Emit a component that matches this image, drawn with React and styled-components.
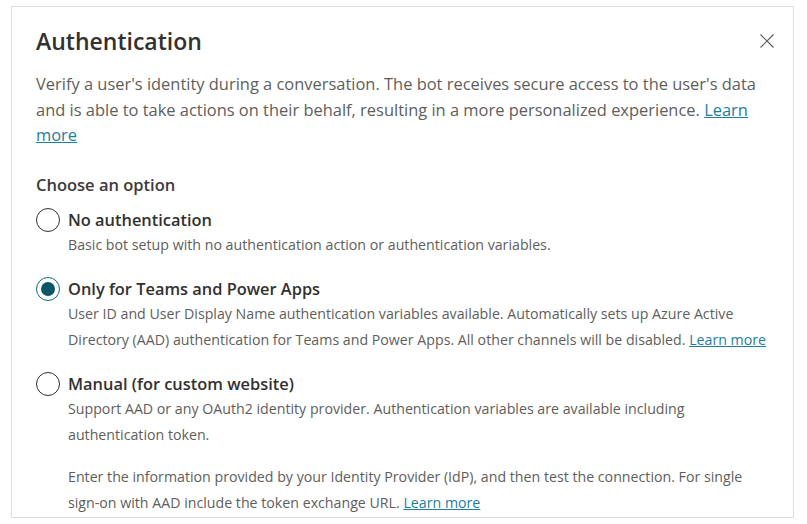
import React, { useState } from "react";
import styled, { createGlobalStyle } from "styled-components";

const GlobalStyle = createGlobalStyle`
  html, body {
    margin: 0;
    padding: 0;
    background: #ffffff;
  }
  body {
    font-family: "Open Sans", "Noto Sans", sans-serif;
    color: #323130;
  }
`;

const options = [
  {
    id: "none",
    label: "No authentication",
    text: "Basic bot setup with no authentication action or authentication variables.",
  },
  {
    id: "teams",
    label: "Only for Teams and Power Apps",
    text: "User ID and User Display Name authentication variables available. Automatically sets up Azure Active Directory (AAD) authentication for Teams and Power Apps. All other channels will be disabled.",
    link: true,
  },
  {
    id: "manual",
    label: "Manual (for custom website)",
    text: "Support AAD or any OAuth2 identity provider. Authentication variables are available including authentication token.",
  },
];

const App = () => {
  const [selected, setSelected] = useState("teams");

  return (
    <>
      <GlobalStyle />
      <Panel>
        <Header>
          <Title>Authentication</Title>
          <CloseButton aria-label="Close">
            <svg width="16" height="16" viewBox="0 0 16 16">
              <path d="M1.5 1.5 L14.5 14.5 M14.5 1.5 L1.5 14.5" stroke="#605e5c" strokeWidth="1.2" fill="none" />
            </svg>
          </CloseButton>
        </Header>

        <Intro>
          Verify a user's identity during a conversation. The bot receives secure access to the user's data
          and is able to take actions on their behalf, resulting in a more personalized experience.{" "}
          <Link href="#">Learn more</Link>
        </Intro>

        <GroupLabel>Choose an option</GroupLabel>

        <OptionList>
          {options.map((o) => (
            <Option key={o.id} onClick={() => setSelected(o.id)}>
              <Radio $checked={selected === o.id} />
              <OptionLabel>{o.label}</OptionLabel>
              <OptionText>
                {o.text}
                {o.link && (
                  <>
                    {" "}
                    <Link href="#">Learn more</Link>
                  </>
                )}
              </OptionText>
            </Option>
          ))}
        </OptionList>

        <Note>
          Enter the information provided by your Identity Provider (IdP), and then test the connection. For single
          sign-on with AAD include the token exchange URL. <Link href="#">Learn more</Link>
        </Note>
      </Panel>
    </>
  );
};

const Panel = styled.div`
  box-sizing: border-box;
  margin: 6px 0 0 11px;
  width: 783px;
  height: 512px;
  border: 1px solid #e1dfdd;
  padding: 20px 20px 0 24px;
  overflow: hidden;
  background: #ffffff;
`;

const Header = styled.div`
  display: flex;
  align-items: center;
  justify-content: space-between;
  height: 28px;
`;

const Title = styled.h1`
  margin: 0;
  font-size: 23px;
  font-weight: 600;
  line-height: 28px;
  color: #323130;
`;

const CloseButton = styled.button`
  display: flex;
  align-items: center;
  justify-content: center;
  width: 24px;
  height: 24px;
  margin-right: -6px;
  padding: 0;
  border: none;
  background: transparent;
  cursor: pointer;
`;

const Intro = styled.p`
  margin: 16px 0 0 0;
  padding-right: 4px;
  font-size: 16.45px;
  line-height: 25.5px;
  color: #605e5c;
`;

const Link = styled.a`
  color: #1e7e9b;
  text-decoration: underline;
`;

const GroupLabel = styled.div`
  margin-top: 26px;
  font-size: 16.5px;
  font-weight: 600;
  line-height: 22px;
  color: #3b3a39;
`;

const OptionList = styled.div`
  display: flex;
  flex-direction: column;
  gap: 20px;
  margin-top: 12px;
`;

const Option = styled.div`
  display: grid;
  grid-template-columns: 24px 1fr;
  column-gap: 8px;
  cursor: pointer;
`;

const Radio = styled.span`
  box-sizing: border-box;
  width: 24px;
  height: 24px;
  border-radius: 50%;
  border: 1.5px solid ${(p) => (p.$checked ? "#0f6a7e" : "#323130")};
  display: flex;
  align-items: center;
  justify-content: center;

  &::after {
    content: "";
    display: ${(p) => (p.$checked ? "block" : "none")};
    width: 14px;
    height: 14px;
    border-radius: 50%;
    background: #0b5569;
  }
`;

const OptionLabel = styled.div`
  align-self: center;
  font-size: 16.4px;
  font-weight: 600;
  line-height: 24px;
  color: #323130;
`;

const OptionText = styled.div`
  grid-column: 2;
  margin-top: 0;
  font-size: 14.2px;
  line-height: 25.5px;
  color: #605e5c;
`;

const Note = styled.p`
  margin: 17px 0 0 32px;
  font-size: 14.2px;
  line-height: 25.5px;
  color: #605e5c;
`;

export default App;
